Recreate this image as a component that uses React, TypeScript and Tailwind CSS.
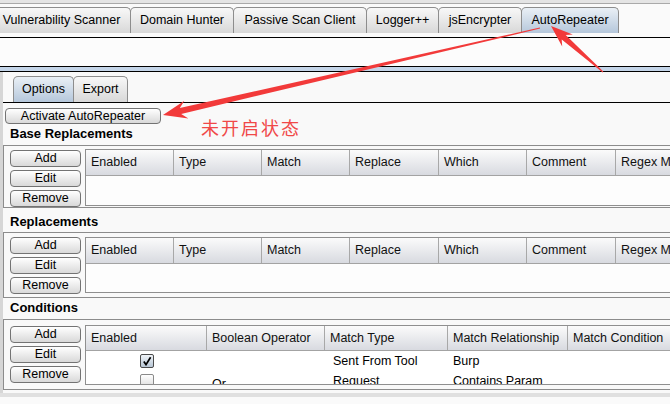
import type { ReactNode } from "react";

type Tab = { label: string; width: string; active?: boolean };
type Column = { label: string; width: string };

const topTabs: Tab[] = [
  { label: "Vulnerability Scanner", width: "w-[139px]" },
  { label: "Domain Hunter", width: "w-[104px]" },
  { label: "Passive Scan Client", width: "w-[134px]" },
  { label: "Logger++", width: "w-[73px]" },
  { label: "jsEncrypter", width: "w-[84px]" },
  { label: "AutoRepeater", width: "w-[98px]", active: true },
];

const replaceColumns: Column[] = [
  { label: "Enabled", width: "w-[88px]" },
  { label: "Type", width: "w-[88px]" },
  { label: "Match", width: "w-[88px]" },
  { label: "Replace", width: "w-[89px]" },
  { label: "Which", width: "w-[88px]" },
  { label: "Comment", width: "w-[89px]" },
  { label: "Regex Match", width: "w-[110px]" },
];

const conditionColumns: Column[] = [
  { label: "Enabled", width: "w-[121px]" },
  { label: "Boolean Operator", width: "w-[118px]" },
  { label: "Match Type", width: "w-[123px]" },
  { label: "Match Relationship", width: "w-[120px]" },
  { label: "Match Condition", width: "w-[120px]" },
];

const conditions = [
  { enabled: true, op: "", type: "Sent From Tool", rel: "Burp" },
  { enabled: false, op: "Or", type: "Request", rel: "Contains Param" },
];

function TabButton({ tab, first }: { tab: Tab; first?: boolean }) {
  return (
    <div
      className={`${tab.width} ${first ? "ml-[-8px]" : "-ml-px"} flex h-full shrink-0 items-center justify-center rounded-t-[5px] border border-b-0 border-[#8d8d8d] ${
        tab.active ? "bg-linear-to-b from-[#eaf0f6] to-[#b5c7db]" : "bg-linear-to-b from-[#f8f8f8] to-[#d8d8d8]"
      }`}
    >
      <span className="whitespace-nowrap">{tab.label}</span>
    </div>
  );
}

function SmallButton({ children, className = "" }: { children: ReactNode; className?: string }) {
  return (
    <button
      type="button"
      className={`flex items-center justify-center rounded-[4px] border border-[#737373] bg-linear-to-b from-white to-[#d9d9d9] leading-none text-black ${className}`}
    >
      {children}
    </button>
  );
}

function SideButtons() {
  return (
    <div className="flex w-[71px] shrink-0 flex-col gap-[3px]">
      <SmallButton className="h-[17px]">Add</SmallButton>
      <SmallButton className="h-[17px]">Edit</SmallButton>
      <SmallButton className="h-[17px]">Remove</SmallButton>
    </div>
  );
}

function HeaderRow({ columns, height }: { columns: Column[]; height: string }) {
  return (
    <div className={`flex ${height} shrink-0 border-b border-[#a3a3a3] bg-linear-to-b from-[#fbfbfb] to-[#d8dae0]`}>
      {columns.map((col) => (
        <div
          key={col.label}
          className={`${col.width} flex shrink-0 items-center whitespace-nowrap border-r border-[#a8a8a8] pl-[5px] text-[#111]`}
        >
          {col.label}
        </div>
      ))}
    </div>
  );
}

function Checkbox({ checked }: { checked: boolean }) {
  return (
    <span
      className={`flex size-[14px] items-center justify-center rounded-[2px] border ${
        checked ? "border-[#4a4a4a] bg-linear-to-b from-[#f0f4f8] to-[#b8c6d5]" : "border-[#8a8a8a] bg-linear-to-b from-white to-[#dcdcdc]"
      }`}
    >
      {checked ? (
        <svg viewBox="0 0 10 10" className="size-[10px]">
          <path d="M1.8 5.4 L4 8.6 L8.6 1.2" fill="none" stroke="#000" strokeWidth="1.7" />
        </svg>
      ) : null}
    </span>
  );
}

function ReplaceTable({ height, headerHeight }: { height: string; headerHeight: string }) {
  return (
    <div className={`flex ${height} flex-1 flex-col overflow-hidden border border-r-0 border-[#8f8f8f] bg-white`}>
      <HeaderRow columns={replaceColumns} height={headerHeight} />
      <div className="flex-1 bg-[#fdfdfd]" />
    </div>
  );
}

export default function App() {
  return (
    <div className="relative h-[404px] w-[670px] overflow-hidden bg-white font-['Liberation_Sans',Arial,sans-serif] text-[12.5px] text-black">
      <div className="h-[4px] border-b border-[#a9a9a9] bg-[#e4e4e4]" />
      <div className="h-[3px] bg-[#fafafa]" />

      <div className="flex h-[26px] items-end bg-[#fafafa]">
        {topTabs.map((tab, i) => (
          <TabButton key={tab.label} tab={tab} first={i === 0} />
        ))}
      </div>
      <div className="h-[4px] bg-[#fafafa]" />
      <div className="h-[29px] border-t border-black bg-[#fcfcfc]" />
      <div className="h-[6px] border-y border-black bg-[#c4d5e9]" />

      <div className="flex h-[321px]">
        <div className="w-[3px] shrink-0 bg-[#d6d6d6]" />
        <div className="flex flex-1 flex-col bg-[#f9f9f9]">
          <div className="flex h-[30px] items-end pl-[10px]">
            <div className="flex h-[26px] w-[61px] items-center justify-center rounded-t-[5px] border border-b-0 border-[#8d8d8d] bg-linear-to-b from-[#eaf0f6] to-[#b5c7db]">
              Options
            </div>
            <div className="-ml-px flex h-[26px] w-[55px] items-center justify-center rounded-t-[5px] border border-b-0 border-[#8d8d8d] bg-linear-to-b from-[#f8f8f8] to-[#d8d8d8]">
              Export
            </div>
          </div>
          <div className="border-t border-black" />

          <div className="pl-[2px] pt-[5px]">
            <SmallButton className="h-[16px] w-[156px]">Activate AutoRepeater</SmallButton>
          </div>

          <div className="flex h-[21px] items-end pb-[2px] pl-[7px] text-[13px] font-bold">Base Replacements</div>
          <div className="flex h-[63px] gap-[4px] border border-r-0 border-[#8c8c8c] pl-[6px]">
            <div className="pt-[4px]">
              <SideButtons />
            </div>
            <div className="flex flex-1 pt-[3px]">
              <ReplaceTable height="h-[57px]" headerHeight="h-[26px]" />
            </div>
          </div>

          <div className="flex h-[24px] items-end pb-[1px] pl-[7px] text-[13px] font-bold">Replacements</div>
          <div className="flex h-[66px] gap-[4px] border border-r-0 border-[#8c8c8c] pl-[6px]">
            <div className="pt-[4px]">
              <SideButtons />
            </div>
            <div className="flex flex-1 pt-[4px]">
              <ReplaceTable height="h-[56px]" headerHeight="h-[26px]" />
            </div>
          </div>

          <div className="flex h-[21px] items-end pb-[2px] pl-[7px] text-[13px] font-bold">Conditions</div>
          <div className="flex h-[71px] gap-[4px] border border-r-0 border-[#8c8c8c] pl-[6px]">
            <div className="pt-[6px]">
              <SideButtons />
            </div>
            <div className="flex flex-1 pt-[5px]">
              <div className="flex h-[60px] flex-1 flex-col overflow-hidden border border-r-0 border-[#8f8f8f] bg-white">
                <HeaderRow columns={conditionColumns} height="h-[25px]" />
                <div className="flex-1 overflow-hidden">
                  {conditions.map((row, i) => (
                    <div key={i} className="flex h-[20px] shrink-0">
                      <div className="flex w-[121px] shrink-0 items-center justify-center">
                        <Checkbox checked={row.enabled} />
                      </div>
                      <div className="flex w-[118px] shrink-0 items-center pl-[5px] pt-[6px]">{row.op}</div>
                      <div className="flex w-[123px] shrink-0 items-center whitespace-nowrap pl-[8px]">{row.type}</div>
                      <div className="flex w-[120px] shrink-0 items-center whitespace-nowrap pl-[5px]">{row.rel}</div>
                    </div>
                  ))}
                </div>
              </div>
            </div>
          </div>
          <div className="flex-1" />
        </div>
      </div>
      <div className="h-[4px] bg-[#e0e0e0]" />
      <div className="h-[7px] bg-[#fafafa]" />

      {/* annotation overlay */}
      <svg className="pointer-events-none absolute inset-0" width="670" height="404" viewBox="0 0 670 404">
        <polygon
          fill="#f23a3a"
          points="163,115 188.4,118.4 181.2,113.9 540.1,28.5 539.9,27.5 179.8,108.1 184.4,100.8"
        />
        <polygon
          fill="#f23a3a"
          points="551,26 572.8,34.6 565.7,35.1 603.3,71.6 602.7,72.4 561.7,39.5 562.2,46.6"
        />
      </svg>
      <span className="pointer-events-none absolute left-[201px] top-[115px] font-['Noto_Sans_CJK_SC',sans-serif] text-[18px] leading-[24px] tracking-[2px] text-[#f04848]">
        未开启状态
      </span>
    </div>
  );
}
